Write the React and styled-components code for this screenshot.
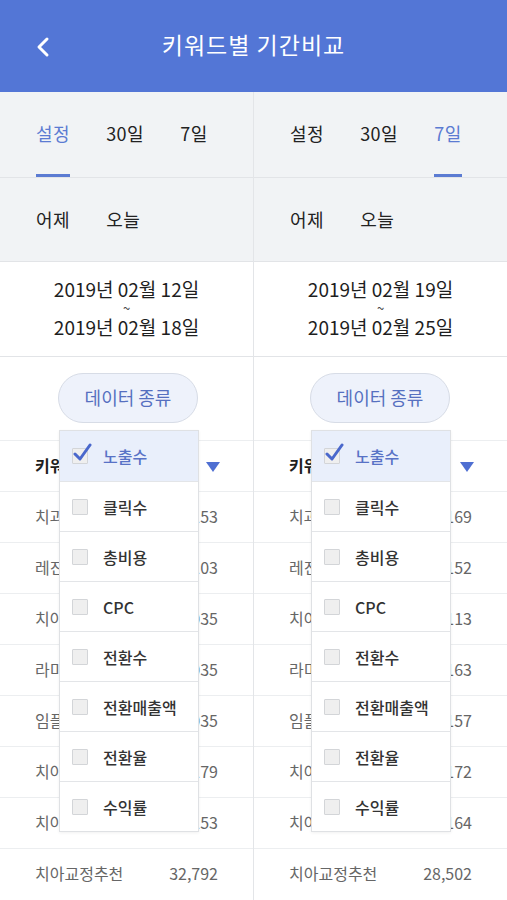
import React from "react";
import styled, { createGlobalStyle } from "styled-components";

const GlobalStyle = createGlobalStyle`
  html, body {
    margin: 0;
    padding: 0;
    background: #ffffff;
    font-family: "Noto Sans CJK KR", "Noto Sans", sans-serif;
  }
  * { box-sizing: border-box; }
`;

const Page = styled.div`
  width: 507px;
  height: 900px;
  overflow: hidden;
  display: flex;
  flex-direction: column;
`;

const Header = styled.div`
  height: 92px;
  flex-shrink: 0;
  background-color: #5376d6;
  display: flex;
  align-items: center;
  justify-content: center;
  position: relative;
`;

const BackButton = styled.div`
  position: absolute;
  left: 34px;
  top: 36px;
  width: 20px;
  height: 22px;
  display: flex;
`;

const Title = styled.h1`
  margin: 0;
  color: #ffffff;
  font-size: 23px;
  font-weight: 400;
  letter-spacing: 1px;
  margin-bottom: 4px;
`;

const Columns = styled.div`
  flex: 1;
  display: grid;
  grid-template-columns: 254px 253px;
`;

const Panel = styled.div`
  position: relative;
  display: flex;
  flex-direction: column;
  border-right: ${(p) => (p.$divider ? "1px solid #e3e5e8" : "none")};
`;

const TabRow = styled.div`
  height: 85px;
  background: #f1f3f5;
  display: flex;
  gap: 36px;
  padding-left: 36px;
`;

const Tab = styled.div`
  position: relative;
  display: flex;
  align-items: center;
  font-size: 18px;
  letter-spacing: 0.5px;
  color: ${(p) => (p.$active ? "#5b7bd2" : "#222")};
  padding-bottom: 4px;
  &::after {
    content: "";
    display: ${(p) => (p.$active ? "block" : "none")};
    position: absolute;
    left: 0;
    right: 0;
    bottom: 0;
    height: 3px;
    background: #5b7bd2;
  }
`;

const QuickRow = styled.div`
  height: 84px;
  background: #f1f3f5;
  border-top: 1px solid #e2e4e7;
  display: flex;
  align-items: center;
  gap: 36px;
  padding-left: 36px;
  font-size: 18px;
  letter-spacing: 0.5px;
  color: #222;
  padding-bottom: 2px;
`;

const DateBox = styled.div`
  height: 95px;
  border-top: 1px solid #e2e4e7;
  display: flex;
  flex-direction: column;
  align-items: center;
  justify-content: center;
  padding-bottom: 2px;
`;

const DateLine = styled.span`
  font-size: 19px;
  line-height: 24px;
  color: #1e1e1e;
`;

const Tilde = styled.span`
  font-size: 13px;
  line-height: 14px;
  height: 14px;
  color: #444;
`;

const ButtonArea = styled.div`
  height: 84px;
  border-top: 1px solid #e2e4e7;
  display: flex;
  align-items: flex-start;
  padding-top: 16px;
  padding-left: ${(p) => p.$left}px;
`;

const PillButton = styled.div`
  width: 140px;
  height: 50px;
  border-radius: 25px;
  border: 1px solid #d7dce6;
  background: #eef2fb;
  color: #5670c0;
  font-size: 18px;
  display: flex;
  align-items: center;
  justify-content: center;
  padding-bottom: 2px;
`;

const TableRow = styled.div`
  height: 51px;
  flex-shrink: 0;
  border-top: 1px solid #eceef0;
  display: flex;
  align-items: center;
  justify-content: space-between;
  padding: 0 35px 2px 35px;
  font-size: 16px;
  color: ${(p) => (p.$head ? "#1e1e1e" : "#666")};
  font-weight: ${(p) => (p.$head ? 700 : 400)};
`;

const SortArrow = styled.div`
  width: 0;
  height: 0;
  border-left: 7px solid transparent;
  border-right: 7px solid transparent;
  border-top: 10px solid #4f6fd2;
  margin-right: -2px;
  margin-top: 4px;
`;

const Dropdown = styled.div`
  position: absolute;
  top: 338px;
  left: ${(p) => p.$left}px;
  width: 140px;
  background: #ffffff;
  border: 1px solid #dfe1e4;
  box-shadow: 0 1px 3px rgba(0, 0, 0, 0.06);
  display: flex;
  flex-direction: column;
`;

const Option = styled.div`
  height: 50px;
  display: flex;
  align-items: center;
  gap: 15px;
  padding-left: 12px;
  border-top: ${(p) => (p.$first ? "none" : "1px solid #e3e5e8")};
  background: ${(p) => (p.$checked ? "#e9effb" : "#fff")};
  color: ${(p) => (p.$checked ? "#5872c6" : "#333")};
  font-size: 16px;
  font-weight: 500;
`;

const CheckBox = styled.div`
  position: relative;
  width: 16px;
  height: 16px;
  flex-shrink: 0;
  border: 1px solid #d3d5d8;
  background: #efefef;
  border-radius: 1px;
`;

const CheckMark = styled.svg`
  position: absolute;
  left: 0;
  top: -6px;
  width: 20px;
  height: 20px;
`;

const options = ["노출수", "클릭수", "총비용", "CPC", "전환수", "전환매출액", "전환율", "수익률"];

const periods = [
  {
    active: 0,
    from: "2019년 02월 12일",
    to: "2019년 02월 18일",
    btnLeft: 58,
    ddLeft: 59,
    rows: [
      ["치과교정", "1,153"],
      ["레진치료", "1,103"],
      ["치아미백", "1,035"],
      ["라미네이트", "1,035"],
      ["임플란트", "1,035"],
      ["치아교정", "1,179"],
      ["치아성형", "1,153"],
      ["치아교정추천", "32,792"],
    ],
  },
  {
    active: 2,
    from: "2019년 02월 19일",
    to: "2019년 02월 25일",
    btnLeft: 56,
    ddLeft: 57,
    rows: [
      ["치과교정", "1,169"],
      ["레진치료", "1,152"],
      ["치아미백", "1,113"],
      ["라미네이트", "1,163"],
      ["임플란트", "1,157"],
      ["치아교정", "1,172"],
      ["치아성형", "1,164"],
      ["치아교정추천", "28,502"],
    ],
  },
];

function PeriodPanel({ data, divider }) {
  return (
    <Panel $divider={divider}>
      <TabRow>
        {["설정", "30일", "7일"].map((t, i) => (
          <Tab key={t} $active={i === data.active}>{t}</Tab>
        ))}
      </TabRow>
      <QuickRow>
        <span>어제</span>
        <span>오늘</span>
      </QuickRow>
      <DateBox>
        <DateLine>{data.from}</DateLine>
        <Tilde>~</Tilde>
        <DateLine>{data.to}</DateLine>
      </DateBox>
      <ButtonArea $left={data.btnLeft}>
        <PillButton>데이터 종류</PillButton>
      </ButtonArea>
      <TableRow $head>
        <span>키워드</span>
        <SortArrow />
      </TableRow>
      {data.rows.map(([k, v]) => (
        <TableRow key={k + v}>
          <span>{k}</span>
          <span>{v}</span>
        </TableRow>
      ))}
      <Dropdown $left={data.ddLeft}>
        {options.map((o, i) => (
          <Option key={o} $first={i === 0} $checked={i === 0}>
            <CheckBox>
              {i === 0 && (
                <CheckMark viewBox="0 0 20 20">
                  <path d="M2 11 L7 16 L17 2" fill="none" stroke="#4a68cc" strokeWidth="3" strokeLinecap="round" strokeLinejoin="round" />
                </CheckMark>
              )}
            </CheckBox>
            <span>{o}</span>
          </Option>
        ))}
      </Dropdown>
    </Panel>
  );
}

export default function App() {
  return (
    <>
      <GlobalStyle />
      <Page>
        <Header>
          <BackButton>
            <svg width="20" height="22" viewBox="0 0 20 22">
              <path d="M13 3 L5 11 L13 19" fill="none" stroke="#fff" strokeWidth="3" strokeLinecap="round" strokeLinejoin="round" />
            </svg>
          </BackButton>
          <Title>키워드별 기간비교</Title>
        </Header>
        <Columns>
          <PeriodPanel data={periods[0]} divider />
          <PeriodPanel data={periods[1]} />
        </Columns>
      </Page>
    </>
  );
}
